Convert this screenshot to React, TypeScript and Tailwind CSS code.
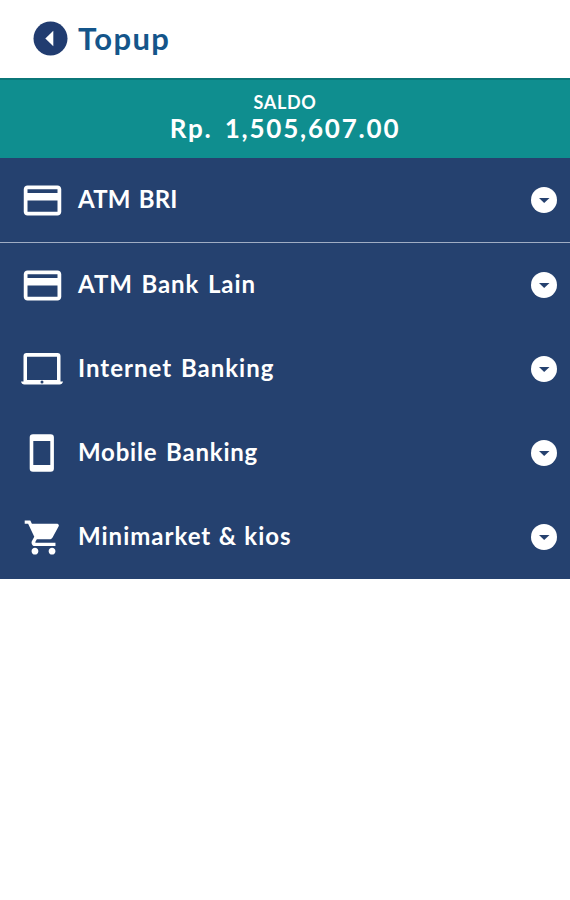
import type { ReactNode } from "react";
import { MdCreditCard, MdShoppingCart } from "react-icons/md";

type MenuItem = {
  label: string;
  icon: ReactNode;
  text: string;
};

const LaptopIcon = () => (
  <svg width="42" height="34" viewBox="0 0 42 34">
    <path
      fill="#fff"
      fillRule="evenodd"
      d="M5.5 1h31a3 3 0 0 1 3 3v25.500H42c-.4 2-1.600 3-3.400 3H3.400C1.600 32.500.4 31.500 0 29.500h2.500V4a3 3 0 0 1 3-3zM6 4.800v23.200h30V4.800z"
    />
    <circle cx="21" cy="30" r="1.500" fill="#25416f" />
  </svg>
);

const PhoneIcon = () => (
  <svg width="26" height="40" viewBox="0 0 26 40">
    <path
      fill="#fff"
      fillRule="evenodd"
      d="M4 1.200h17.600a3.300 3.300 0 0 1 3.300 3.300v31a3.300 3.300 0 0 1-3.300 3.300H4a3.300 3.300 0 0 1-3.300-3.300v-31A3.300 3.300 0 0 1 4 1.200zM4.300 8v24h17V8z"
    />
  </svg>
);

const items: MenuItem[] = [
  {
    label: "ATM BRI",
    icon: <MdCreditCard size={45} />,
    text: "tracking-[0.2px] [word-spacing:2px]",
  },
  {
    label: "ATM Bank Lain",
    icon: <MdCreditCard size={45} />,
    text: "tracking-[0.9px] [word-spacing:2px]",
  },
  {
    label: "Internet Banking",
    icon: <LaptopIcon />,
    text: "tracking-[1px] [word-spacing:2px]",
  },
  {
    label: "Mobile Banking",
    icon: <PhoneIcon />,
    text: "tracking-[0.8px] [word-spacing:2px]",
  },
  {
    label: "Minimarket & kios",
    icon: <MdShoppingCart size={41} className="ml-[2px]" />,
    text: "tracking-[1px] [word-spacing:0.5px]",
  },
];

const Header = () => {
  return (
    <header className="flex h-[78px] items-center bg-white pl-[33px]">
      <svg width="35" height="35" viewBox="0 0 35 35" className="mb-px">
        <circle cx="17.500" cy="17.500" r="17" fill="#213c70" />
        <path d="M20.300 9.800v15.400L12.300 17.500z" fill="#fff" />
      </svg>
      <h1 className="ml-[10px] pb-0.5 text-[31px] leading-none font-bold tracking-[1.4px] text-[#14558a]">
        Topup
      </h1>
    </header>
  );
};

const Balance = () => {
  return (
    <section className="flex h-20 flex-col items-center border-t-2 border-[#0b7779] bg-[#0f8e8f] pt-[11px] text-white">
      <p className="text-[18px] leading-[22px] font-bold tracking-[0.7px]">
        SALDO
      </p>
      <p className="text-[26px] leading-[31px] font-bold tracking-[1.8px] [word-spacing:4px]">
        Rp. 1,505,607.00
      </p>
    </section>
  );
};

const MenuRow = ({ item, divider }: { item: MenuItem; divider: boolean }) => {
  return (
    <li
      className={`flex items-center pr-[13px] pl-[19px] ${
        divider ? "h-[85px] border-b border-[#a0adc4]" : "flex-1"
      }`}
    >
      <span className="flex w-[46px] justify-center">{item.icon}</span>
      <span
        className={`ml-[13px] flex-1 pb-0.5 text-[24px] leading-8 font-bold whitespace-nowrap ${item.text}`}
      >
        {item.label}
      </span>
      <svg width="26" height="26" viewBox="0 0 26 26">
        <circle cx="13" cy="13" r="13" fill="#fff" />
        <path d="M8 11h10.500L13.200 16z" fill="#25416f" />
      </svg>
    </li>
  );
};

const App = () => {
  return (
    <main className="h-[900px] w-[570px] overflow-hidden bg-white font-[Lato,sans-serif]">
      <Header />
      <Balance />
      <ul className="flex h-[421px] flex-col bg-[#25416f] text-white">
        {items.map((item, i) => (
          <MenuRow key={item.label} item={item} divider={i === 0} />
        ))}
      </ul>
    </main>
  );
};

export default App;
